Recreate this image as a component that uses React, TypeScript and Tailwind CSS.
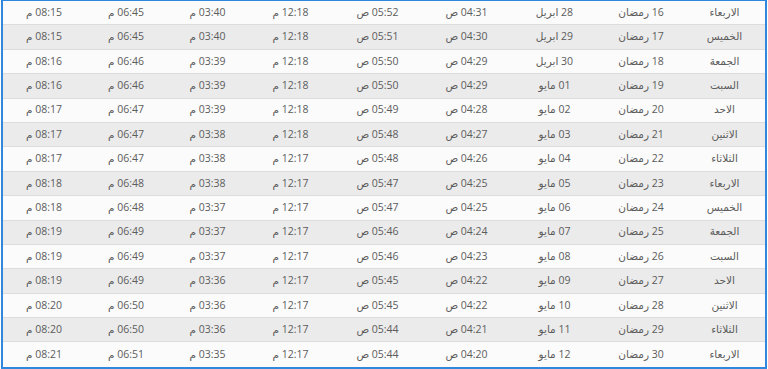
import React from "react";

type Row = {
  day: string;
  hijri: string;
  greg: string;
  times: string[];
};

const rows: Row[] = [
  { day: "الاربعاء", hijri: "16 رمضان", greg: "28 ابريل", times: ["04:31 ص", "05:52 ص", "12:18 م", "03:40 م", "06:45 م", "08:15 م"] },
  { day: "الخميس", hijri: "17 رمضان", greg: "29 ابريل", times: ["04:30 ص", "05:51 ص", "12:18 م", "03:40 م", "06:45 م", "08:15 م"] },
  { day: "الجمعة", hijri: "18 رمضان", greg: "30 ابريل", times: ["04:29 ص", "05:50 ص", "12:18 م", "03:39 م", "06:46 م", "08:16 م"] },
  { day: "السبت", hijri: "19 رمضان", greg: "01 مايو", times: ["04:29 ص", "05:50 ص", "12:18 م", "03:39 م", "06:46 م", "08:16 م"] },
  { day: "الاحد", hijri: "20 رمضان", greg: "02 مايو", times: ["04:28 ص", "05:49 ص", "12:18 م", "03:39 م", "06:47 م", "08:17 م"] },
  { day: "الاثنين", hijri: "21 رمضان", greg: "03 مايو", times: ["04:27 ص", "05:48 ص", "12:18 م", "03:38 م", "06:47 م", "08:17 م"] },
  { day: "الثلاثاء", hijri: "22 رمضان", greg: "04 مايو", times: ["04:26 ص", "05:48 ص", "12:17 م", "03:38 م", "06:47 م", "08:17 م"] },
  { day: "الاربعاء", hijri: "23 رمضان", greg: "05 مايو", times: ["04:25 ص", "05:47 ص", "12:17 م", "03:38 م", "06:48 م", "08:18 م"] },
  { day: "الخميس", hijri: "24 رمضان", greg: "06 مايو", times: ["04:25 ص", "05:47 ص", "12:17 م", "03:37 م", "06:48 م", "08:18 م"] },
  { day: "الجمعة", hijri: "25 رمضان", greg: "07 مايو", times: ["04:24 ص", "05:46 ص", "12:17 م", "03:37 م", "06:49 م", "08:19 م"] },
  { day: "السبت", hijri: "26 رمضان", greg: "08 مايو", times: ["04:23 ص", "05:46 ص", "12:17 م", "03:37 م", "06:49 م", "08:19 م"] },
  { day: "الاحد", hijri: "27 رمضان", greg: "09 مايو", times: ["04:22 ص", "05:45 ص", "12:17 م", "03:36 م", "06:49 م", "08:19 م"] },
  { day: "الاثنين", hijri: "28 رمضان", greg: "10 مايو", times: ["04:22 ص", "05:45 ص", "12:17 م", "03:36 م", "06:50 م", "08:20 م"] },
  { day: "الثلاثاء", hijri: "29 رمضان", greg: "11 مايو", times: ["04:21 ص", "05:44 ص", "12:17 م", "03:36 م", "06:50 م", "08:20 م"] },
  { day: "الاربعاء", hijri: "30 رمضان", greg: "12 مايو", times: ["04:20 ص", "05:44 ص", "12:17 م", "03:35 م", "06:51 م", "08:21 م"] },
];

export default function App() {
  return (
    <div className="w-[768px] h-[369px] bg-white overflow-hidden px-[1px]">
      <div
        dir="rtl"
        className="-mt-[1px] border-2 border-[#3088dc] text-[10.5px] text-[#5c5c5c]"
        style={{ fontFamily: '"Open Sans", "DejaVu Sans", sans-serif' }}
      >
        {rows.map((row, idx) => {
          const cells = [row.day, row.hijri, row.greg, ...row.times];
          return (
            <div
              key={idx}
              className={`grid grid-cols-[81px_86px_87px_89px_89px_85px_81px_82px_82px] h-[24.4px] items-center border-b border-[#dcdcdc] last:border-b-0 ${
                idx % 2 === 0 ? "bg-[#fbfbfb]" : "bg-[#ebebeb]"
              }`}
            >
              {cells.map((c, i) => (
                <div key={i} className="text-center whitespace-nowrap">
                  {c}
                </div>
              ))}
            </div>
          );
        })}
      </div>
    </div>
  );
}
